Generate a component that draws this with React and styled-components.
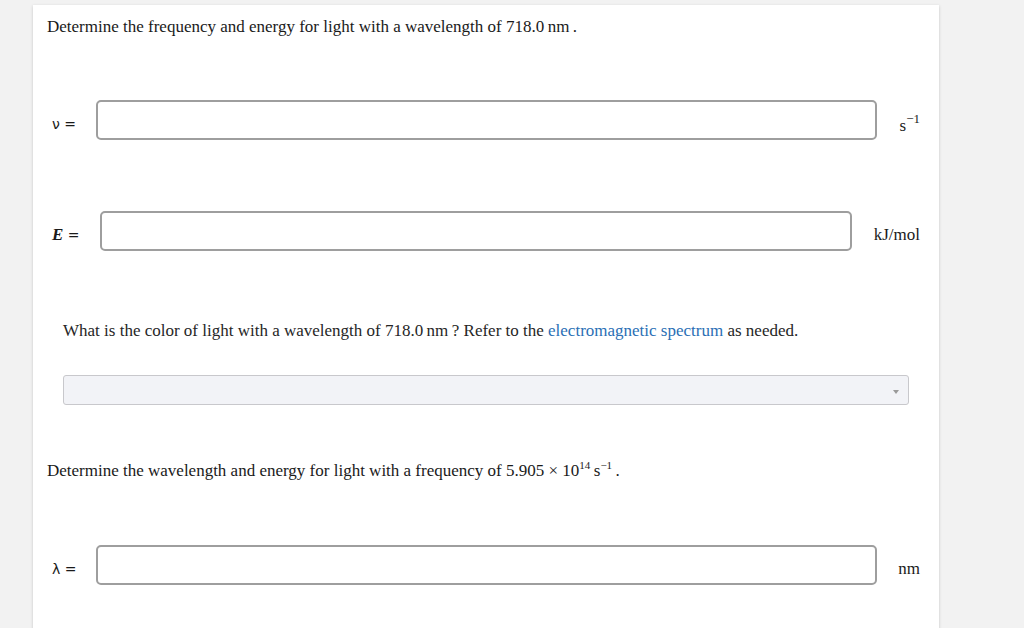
import styled, { createGlobalStyle } from 'styled-components'

const Global = createGlobalStyle`
    html, body {
        margin: 0;
        padding: 0;
        background: #f2f2f2;
        overflow: hidden;
    }
`

const Page = styled.div`
    width: 1024px;
    height: 628px;
    padding: 5px 0 0 33px;
    box-sizing: border-box;
    overflow: hidden;
`

const Card = styled.section`
    width: 906px;
    min-height: 700px;
    background: #ffffff;
    box-shadow: 0 1px 3px rgba(0, 0, 0, 0.18);
    padding: 10px 19px 0 14px;
    box-sizing: border-box;
    font-family: "Liberation Serif", "Times New Roman", serif;
    color: #1a1a1a;
`

const Prompt = styled.p`
    margin: ${p => p.$top || 0}px 0 0 0;
    font-size: 17px;
    line-height: 24px;

    sup {
        font-size: 11px;
        line-height: 0;
        vertical-align: baseline;
        position: relative;
        top: -7px;
    }
`

const Row = styled.div`
    display: flex;
    align-items: center;
    gap: ${p => p.$gap || 20}px;
    margin-top: ${p => p.$top}px;
    padding-left: 5px;
`

const Label = styled.span`
    font-family: "DejaVu Sans", Verdana, sans-serif;
    font-size: 14px;
    white-space: nowrap;
    padding-top: 8px;
`

const Var = styled.i`
    font-family: ${p => p.$serif ? '"Liberation Serif", serif' : '"DejaVu Sans", sans-serif'};
    font-weight: ${p => p.$serif ? 700 : 400};
    font-size: ${p => p.$serif ? 17 : 14}px;
    font-style: ${p => p.$serif ? 'italic' : 'normal'};
`

const Field = styled.div`
    flex: 1;
    height: 40px;
    border: 2px solid #9e9e9e;
    border-radius: 5px;
    box-sizing: border-box;
    background: #fff;
`

const Unit = styled.span`
    width: ${p => p.$w}px;
    font-size: 17px;
    white-space: nowrap;
    text-align: right;
    margin-left: 1px;
    padding-top: 8px;

    sup {
        font-size: 13px;
        position: relative;
        top: -1px;
    }
`

const Block = styled.div`
    padding: 0 11px 0 16px;
    margin-top: ${p => p.$top}px;
`

const Question = styled.p`
    margin: 0;
    font-size: 17px;
    line-height: 20px;
    color: #262626;
`

const Link = styled.a`
    color: #2a6fb5;
    text-decoration: none;
`

const Select = styled.div`
    margin-top: 34px;
    height: 30px;
    background: #f2f3f7;
    border: 1px solid #c8c8cc;
    border-radius: 3px;
    box-sizing: border-box;
    display: flex;
    align-items: center;
    justify-content: flex-end;
    padding-right: 9px;
    padding-top: 4px;

    &::after {
        content: "";
        border-left: 3.5px solid transparent;
        border-right: 3.5px solid transparent;
        border-top: 4px solid #9a9a9a;
    }
`

export default function App() {
    return (
        <Page>
            <Global />
            <Card>
                <Prompt>Determine the frequency and energy for light with a wavelength of 718.0&thinsp;nm&thinsp;.</Prompt>

                <Row $top={61}>
                    <Label><Var>ν</Var> =</Label>
                    <Field />
                    <Unit $w={22}>s<sup>−1</sup></Unit>
                </Row>

                <Row $top={71}>
                    <Label><Var $serif>E</Var> =</Label>
                    <Field />
                    <Unit $w={47}>kJ/mol</Unit>
                </Row>

                <Block $top={70}>
                    <Question>
                        What is the color of light with a wavelength of 718.0&thinsp;nm&thinsp;? Refer to the <Link href="#">electromagnetic spectrum</Link> as needed.
                    </Question>
                    <Select />
                </Block>

                <Prompt $top={54}>
                    Determine the wavelength and energy for light with a frequency of 5.905 × 10<sup>14</sup>&thinsp;s<sup>−1</sup>&thinsp;.
                </Prompt>

                <Row $top={62}>
                    <Label><Var>λ</Var> =</Label>
                    <Field />
                    <Unit $w={22}>nm</Unit>
                </Row>
            </Card>
        </Page>
    )
}
